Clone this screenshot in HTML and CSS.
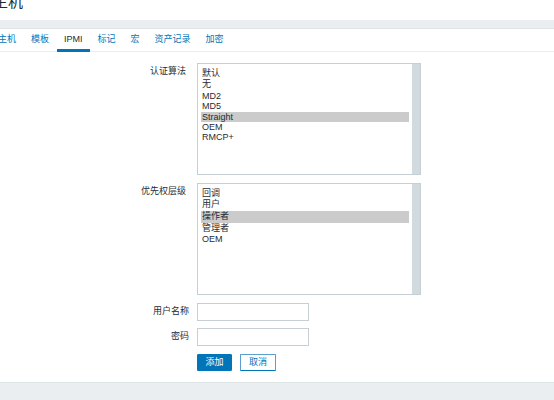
FILE: index.html
```html
<!DOCTYPE html>
<html lang="zh-CN">
<head>
<meta charset="utf-8">
<title>主机</title>
<link rel="stylesheet" href="styles.css">
</head>
<body>
<header class="page-title"><h1>主机</h1></header>
<div class="band"></div>
<ul class="tabs">
  <li class="tab">主机</li>
  <li class="tab">模板</li>
  <li class="tab active">IPMI</li>
  <li class="tab">标记</li>
  <li class="tab">宏</li>
  <li class="tab">资产记录</li>
  <li class="tab">加密</li>
</ul>
<main class="form">
  <div class="row">
    <label class="label label-list">认证算法</label>
    <div class="listbox">
      <div class="opts">
        <div class="opt cjk">默认</div>
        <div class="opt cjk">无</div>
        <div class="opt">MD2</div>
        <div class="opt">MD5</div>
        <div class="opt sel">Straight</div>
        <div class="opt">OEM</div>
        <div class="opt">RMCP+</div>
      </div>
      <div class="sb"></div>
    </div>
  </div>
  <div class="row">
    <label class="label label-list">优先权层级</label>
    <div class="listbox">
      <div class="opts">
        <div class="opt cjk">回调</div>
        <div class="opt cjk">用户</div>
        <div class="opt cjk sel">操作者</div>
        <div class="opt cjk">管理者</div>
        <div class="opt">OEM</div>
      </div>
      <div class="sb"></div>
    </div>
  </div>
  <div class="row tight">
    <label class="label">用户名称</label>
    <div class="input"></div>
  </div>
  <div class="row">
    <label class="label">密码</label>
    <div class="input"></div>
  </div>
  <div class="buttons">
    <button class="btn btn-primary">添加</button>
    <button class="btn btn-alt">取消</button>
  </div>
</main>
<footer class="footer"></footer>
</body>
</html>
```
FILE: styles.css
```css
html, body {
  margin: 0;
  padding: 0;
  background: #ffffff;
  overflow: hidden;
}
body {
  width: 554px;
  height: 400px;
  font-family: "Liberation Sans", "Noto Sans CJK SC", sans-serif;
  font-size: 9px;
  color: #1f2c33;
}
.page-title {
  height: 20px;
  overflow: hidden;
}
.page-title h1 {
  margin: -6px 0 0 -7px;
  font-size: 15px;
  line-height: 15px;
  font-weight: normal;
  color: #1f2c33;
}
.band {
  height: 8px;
  background: #ebeef0;
  border-bottom: 1px solid #dfe4e7;
}
.tabs {
  display: flex;
  align-items: flex-start;
  list-style: none;
  margin: 0 0 0 -9.5px;
  padding: 0;
  height: 22px;
  border-bottom: 1px solid #ebeef0;
}
.tab {
  box-sizing: border-box;
  height: 22px;
  padding: 5px 7.5px 0;
  line-height: 11px;
  color: #0275b8;
  white-space: nowrap;
}
.tab.active {
  height: 23px;
  margin-bottom: -1px;
  color: #1f2c33;
  border-bottom: 3px solid #0275b8;
}
.form {
  padding: 11px 0 11px;
}
.row {
  display: flex;
  gap: 8px;
  margin-bottom: 8px;
}
.row.tight {
  margin-bottom: 7px;
}
.label {
  box-sizing: border-box;
  width: 189px;
  flex: none;
  text-align: right;
  padding-top: 3px;
  line-height: 11.7px;
  color: #1f2c33;
}
.label-list {
  padding-right: 3px;
}
.listbox {
  box-sizing: border-box;
  display: flex;
  width: 224px;
  height: 112px;
  border: 1px solid #c5cfd4;
  background: #ffffff;
}
.opts {
  flex: 1;
  padding: 3.5px 3px 0 3px;
}
.opt {
  padding-left: 1px;
  line-height: 10.35px;
  height: 10.35px;
  white-space: nowrap;
}
.opt.cjk {
  line-height: 11.7px;
  height: 11.7px;
}
.opt.sel {
  background: #cbcbcb;
}
.sb {
  width: 8px;
  flex: none;
  background: #d1dade;
}
.input {
  box-sizing: border-box;
  width: 112px;
  height: 18px;
  border: 1px solid #c5cfd4;
  background: #ffffff;
}
.buttons {
  display: flex;
  gap: 8px;
  margin-left: 197px;
}
.btn {
  box-sizing: border-box;
  height: 17px;
  padding: 0;
  font-family: "Liberation Sans", "Noto Sans CJK SC", sans-serif;
  font-size: 9px;
  line-height: 15px;
  border-radius: 1px;
  cursor: pointer;
}
.btn-primary {
  width: 35px;
  background: #0275b8;
  border: 1px solid #0275b8;
  color: #ffffff;
}
.btn-alt {
  width: 36px;
  background: #ffffff;
  border: 1px solid #5a9fcf;
  border-bottom-color: #0275b8;
  color: #0275b8;
}
.footer {
  height: 17px;
  background: #ebeef0;
  border-top: 1px solid #dfe4e7;
}
```
